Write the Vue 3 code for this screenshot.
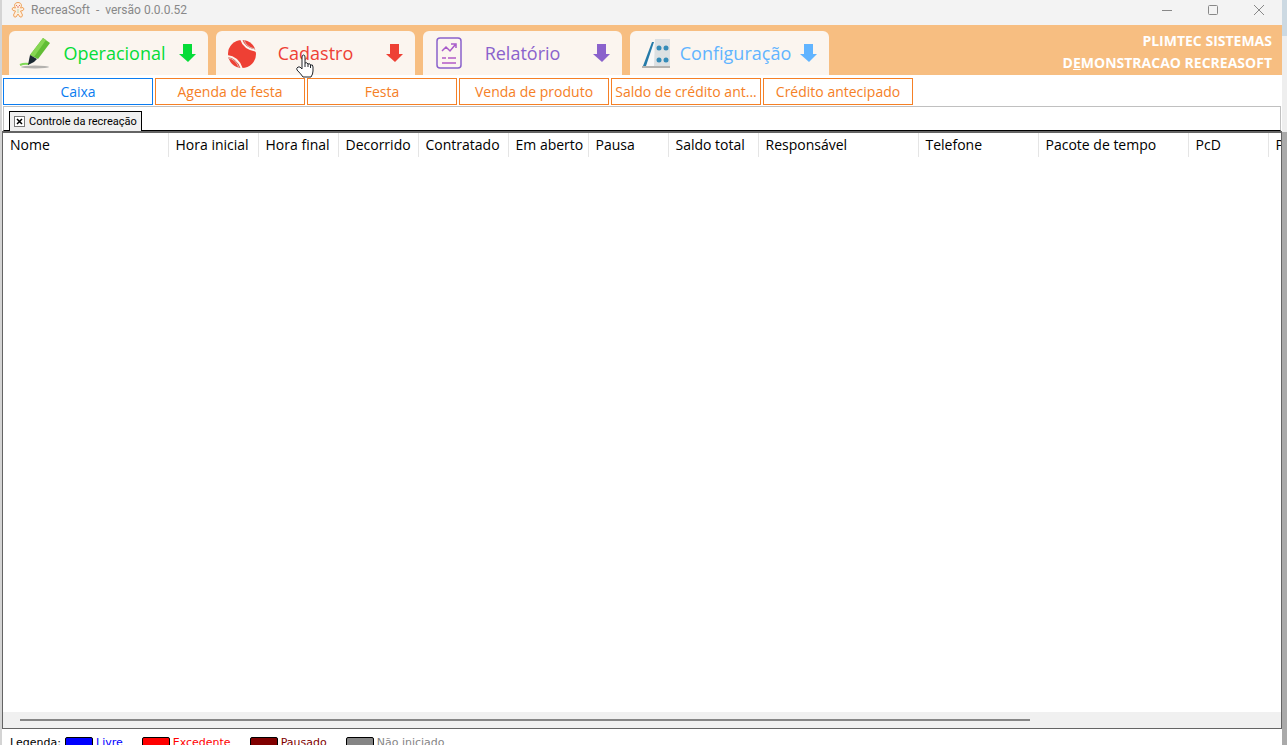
<script setup>
const modules = [
  { id: 'op', label: 'Operacional' },
  { id: 'cad', label: 'Cadastro' },
  { id: 'rel', label: 'Relatório' },
  { id: 'conf', label: 'Configuração' },
]
const actions = ['Caixa', 'Agenda de festa', 'Festa', 'Venda de produto', 'Saldo de crédito ant...', 'Crédito antecipado']
const columns = [
  ['Nome', 165], ['Hora inicial', 90], ['Hora final', 80], ['Decorrido', 80], ['Contratado', 90],
  ['Em aberto', 80], ['Pausa', 80], ['Saldo total', 90], ['Responsável', 160], ['Telefone', 120],
  ['Pacote de tempo', 150], ['PcD', 80], ['P', 160],
]
const legend = [
  { id: 'livre', label: 'Livre' },
  { id: 'excedente', label: 'Excedente' },
  { id: 'pausado', label: 'Pausado' },
  { id: 'nao', label: 'Não iniciado' },
]
</script>

<template>
  <div class="desktop">
    <main class="window">
      <header class="titlebar">
        <svg class="logo" viewBox="0 0 14 18" aria-hidden="true">
          <path d="M4.500 7C2.500 4 4 1.500 7 1.500S11.500 4 9.500 7L12 6.500Q14 8 12 9.500L9.500 10 11.500 14Q11 17 9 16L7 13 5 16Q3 17 2.500 14L4.500 10 2 9.500Q0 8 2 6.500Z" />
          <path class="dots" d="M5 4.500h1M8 4.500h1M6 6h2" />
          <path class="buttons" d="M6.500 9h1M6.500 11h1" />
        </svg>
        <h1>RecreaSoft&nbsp; -&nbsp; versão 0.0.0.52</h1>
        <div class="controls">
          <button aria-label="Minimizar"><svg viewBox="0 0 12 12"><path d="M1 6.500h10" /></svg></button>
          <button aria-label="Maximizar"><svg viewBox="0 0 12 12"><rect x="1.500" y="1.500" width="9" height="9" rx="1" /></svg></button>
          <button aria-label="Fechar"><svg viewBox="0 0 12 12"><path d="M1 1l10 10M11 1L1 11" /></svg></button>
        </div>
      </header>

      <div class="ribbon">
        <nav class="modules">
          <button v-for="m in modules" :key="m.id" class="module" :class="m.id">
            <svg v-if="m.id === 'op'" class="icon" viewBox="0 0 32 32" aria-hidden="true">
              <ellipse cx="17" cy="30" rx="14" ry="1.500" fill="#b4b2af" />
              <path d="M2 28Q6 26 11 27" fill="none" stroke="#7ed957" stroke-width="2" />
              <path d="M25 1L32 6 20 22 12 18Z" fill="#62bd35" />
              <path d="M25 1L28 3 16 20 12 18Z" fill="#87d653" />
              <path d="M12 18L19 22 16 25 10 28 11 23Z" fill="#1c2a33" />
            </svg>
            <svg v-else-if="m.id === 'cad'" class="icon" viewBox="0 0 32 32" aria-hidden="true">
              <circle cx="17" cy="17" r="14" fill="#ee4034" />
              <g fill="none" stroke="#fbf5ef" stroke-width="2">
                <path d="M16 2Q19 12 32 14" /><path d="M2 19Q13 20 17 32" />
              </g>
              <g fill="none" stroke="#d9b5ae" stroke-width="1">
                <path d="M19 3Q21 10 30 12" /><path d="M3 21Q11 22 14 31" />
              </g>
            </svg>
            <svg v-else-if="m.id === 'rel'" class="icon" viewBox="0 0 32 32" aria-hidden="true">
              <g fill="none" stroke="#8a62cc" stroke-width="1.500">
                <rect x="5" y="1" width="24" height="30" rx="3" />
                <path d="M10 21h4M10 26h14M16 21h8" stroke="#b35ac8" />
                <path d="M10 14l4-4 4 4 5-6M19 7h5v4" stroke="#a85bca" />
              </g>
            </svg>
            <svg v-else class="icon" viewBox="0 0 32 32" aria-hidden="true">
              <path d="M3 29h28v2H3z" fill="#b4b2af" />
              <path d="M13 5L17 3V29H5Z" fill="#f8f8f8" />
              <path d="M13 5h2L7 29H4z" fill="#267ba8" />
              <path d="M16 2h15v27H15z" fill="#dce0e2" />
              <g fill="#348bb8"><circle cx="20" cy="11" r="2.500" /><circle cx="27" cy="11" r="2.500" /><circle cx="20" cy="23" r="2.500" /><circle cx="27" cy="23" r="2.500" /></g>
            </svg>
            <span>{{ m.label }}</span>
            <svg class="arrow" viewBox="0 0 18 18" aria-hidden="true"><path d="M4 0h9v10h4L9 18 0 10h4z" /></svg>
          </button>
        </nav>
        <div class="company">
          <div>PLIMTEC SISTEMAS</div>
          <div>D<u>E</u>MONSTRACAO RECREASOFT</div>
        </div>
      </div>

      <div class="actions">
        <button v-for="(a, i) in actions" :key="a" class="action" :class="{ current: i === 0 }">{{ a }}</button>
      </div>

      <div class="tabs">
        <div class="tab">
          <button class="close" aria-label="Fechar Controle da recreação"><svg viewBox="0 0 9 9"><path d="M2 2l5 5M7 2L2 7" /></svg></button>
          <span>Controle da recreação</span>
        </div>
      </div>

      <section class="grid">
        <div class="viewport">
          <table>
            <colgroup><col v-for="c in columns" :key="c[0]" :style="{ width: c[1] + 'px' }"></colgroup>
            <thead><tr><th v-for="c in columns" :key="c[0]" scope="col">{{ c[0] }}</th></tr></thead>
          </table>
        </div>
        <div class="scroll"><div class="thumb"></div></div>
      </section>

      <footer class="legend">
        <span class="caption">Legenda:</span>
        <span v-for="l in legend" :key="l.id" class="key" :class="l.id"><i></i>{{ l.label }}</span>
      </footer>
    </main>
    <aside class="edge"></aside>

    <svg class="cursor" viewBox="0 0 18 24" aria-hidden="true">
      <path d="M6 14V3Q6 1 7.500 1T9 3V9Q11 8 12 10 14 9 14.500 11 17 10 17 13V17Q17 20 15 23H7Q5 20 1 16 0 14 2 13 4 12 6 15Z" />
      <path d="M9 9v4M12 10v3M14.500 11v3" />
    </svg>
  </div>
</template>

<style>
html, body, #app { height: 100%; }
body { margin: 0; overflow: hidden; }
</style>

<style scoped>
.desktop { position: relative; display: flex; height: 100vh; overflow: hidden; padding-left: 2px; box-sizing: border-box; background: #d4d4d4; font-family: "Open Sans", "Noto Sans", sans-serif; }
button { margin: 0; padding: 0; border: 0; background: none; font: inherit; color: inherit; }
svg { display: block; flex: none; }
.window { flex: 1; min-width: 0; display: flex; flex-direction: column; background: #fff; }
.titlebar { flex: none; display: flex; align-items: center; height: 25px; padding: 0 10px 6px 9px; box-sizing: border-box; background: #f3f3f3; color: #888; }
.logo { width: 14px; height: 18px; margin-right: 6px; fill: #fff0df; stroke: #efa35d; }
.logo .dots { stroke: #df7770; }
.logo .buttons { stroke: #6dbf8a; }
h1 { margin: 0; font-family: Roboto, sans-serif; font-size: 12px; line-height: 18px; font-weight: 400; }
.controls { margin-left: auto; display: flex; gap: 20px; }
.controls button { width: 26px; height: 18px; display: flex; align-items: center; justify-content: center; }
.controls svg { width: 12px; height: 12px; fill: none; stroke: #888; }
.ribbon { flex: none; height: 50px; box-sizing: border-box; padding: 6px 10px 0 7px; display: flex; justify-content: space-between; background: #f7be81; }
.modules { display: flex; gap: 8px; }
.module { display: flex; align-items: center; width: 199px; height: 44px; padding: 0 11px 0 9px; box-sizing: border-box; border-radius: 6px 6px 0 0; background: #fbf5ef; font-size: 18px; font-weight: 400; line-height: 26px; }
.module span { flex: 1; text-align: center; }
.cad span, .rel span { padding-right: 12px; }
.icon { width: 32px; height: 32px; }
.arrow { width: 18px; height: 18px; fill: currentColor; }
.op { color: #06dc38; }
.cad { color: #ee4034; }
.rel { color: #8a62cc; }
.conf { color: #61b4ff; }
.company { margin-top: -1px; text-align: right; color: #fff; font-size: 14px; line-height: 22px; font-weight: 700; white-space: nowrap; }
.actions { flex: none; display: flex; gap: 2px; padding: 3px 1px 1px; }
.action { width: 150px; height: 27px; border: 1px solid #f58026; color: #f58026; font-size: 14px; line-height: 24px; white-space: nowrap; }
.action.current { border-color: #0a7cf0; color: #0a7cf0; }
.tabs { flex: none; height: 25px; margin: 0 1px; padding: 4px 5px 0; box-sizing: border-box; border: 1px solid #c0c0c0; border-bottom: 1px solid #000; display: flex; }
.tab { display: flex; align-items: center; gap: 4px; height: 20px; padding: 0 4px; border: 1px solid #000; border-bottom: 0; box-sizing: border-box; background: #f0f0f0; font-family: Roboto, sans-serif; font-size: 11px; line-height: 18px; white-space: nowrap; }
.close { width: 11px; height: 11px; border: 1px solid #777; box-sizing: border-box; background: #fff; }
.close svg { width: 9px; height: 9px; stroke: #000; stroke-width: 1.500; }
.grid { flex: 1; min-height: 0; display: flex; flex-direction: column; border: 1px solid #646464; border-top: 2px solid #646464; }
.viewport { flex: 1; min-height: 0; overflow: hidden; }
table { width: 1425px; table-layout: fixed; border-collapse: collapse; }
th { height: 24px; box-sizing: border-box; padding: 0 0 0 7px; border-right: 1px solid #e5e5e5; font-size: 14px; line-height: 24px; font-weight: 400; text-align: left; white-space: nowrap; }
.scroll { flex: none; height: 16px; padding: 7px 251px 0 17px; box-sizing: border-box; background: #f0f0f0; }
.thumb { height: 2px; background: #858585; }
.legend { flex: none; height: 16px; overflow: hidden; display: flex; padding: 6px 8px 0; box-sizing: border-box; font-family: "DejaVu Sans", sans-serif; font-size: 11px; line-height: 16px; }
.caption { width: 55px; }
.key { display: flex; gap: 3px; margin-right: 19px; }
.key i { width: 28px; height: 12px; margin-top: 2px; box-sizing: border-box; border: 1px solid #000; border-radius: 2px; background: currentColor; }
.livre { color: #00f; }
.excedente { color: #f00; }
.pausado { color: #800000; }
.nao { color: #858585; }
.edge { flex: none; width: 5px; background: linear-gradient(#ccd9e2 0 36px, #eee 36px 132px, #aaa 132px); }
.cursor { position: absolute; left: 296px; top: 54px; width: 18px; height: 24px; fill: #fff; stroke: #20252b; }
</style>
